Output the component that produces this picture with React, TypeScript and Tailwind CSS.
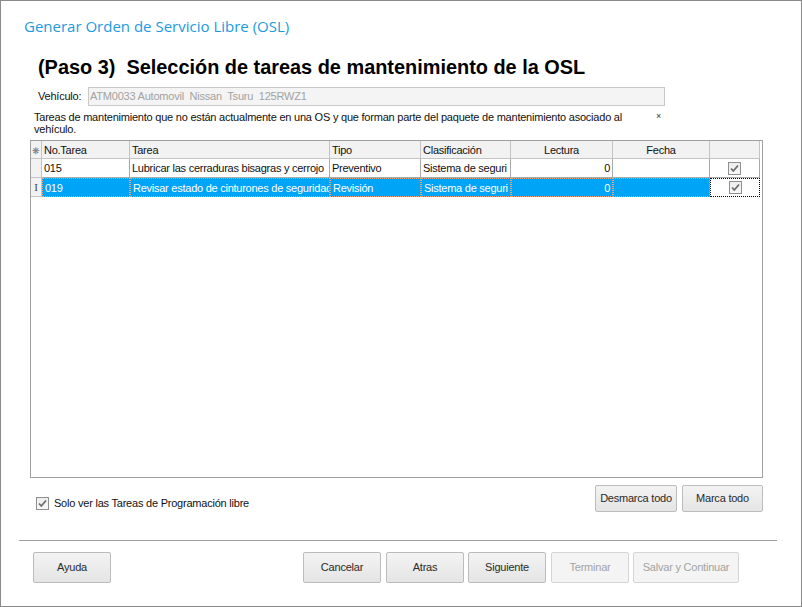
import React from "react";

const F = { fontFamily: '"Liberation Sans", Arial, sans-serif' };

function Check() {
  return (
    <span className="inline-flex w-[13px] h-[13px] border border-[#8e8f8f] bg-gradient-to-b from-[#ededed] to-[#f8f8f8] items-center justify-center">
      <svg width="11" height="11" viewBox="0 0 11 11">
        <path d="M2 5.5 L4.3 8 L9 2.5" fill="none" stroke="#6d6d6d" strokeWidth="1.8" />
      </svg>
    </span>
  );
}

function Btn({ label, cls, disabled }: { label: string; cls: string; disabled?: boolean }) {
  return (
    <div
      className={
        "flex items-center justify-center rounded-[2px] border text-[11px] " +
        cls +
        (disabled
          ? " border-[#d5d5d5] bg-[#f4f4f4] text-[#a3a3a3]"
          : " border-[#bcbcbc] bg-gradient-to-b from-[#f3f3f3] to-[#e5e5e5] text-[#2a2a2a]")
      }
    >
      {label}
    </div>
  );
}

const cols = "grid-cols-[11px_88px_200px_91px_90px_102px_97px_50px]";

function HeadCell({ children, center }: { children?: React.ReactNode; center?: boolean }) {
  return (
    <div
      className={
        "h-[18px] leading-[18px] border-r border-b border-[#c4c4c4] bg-[#f2f2f2] px-[2px] whitespace-nowrap overflow-hidden " +
        (center ? "text-center" : "")
      }
    >
      {children}
    </div>
  );
}

function Cell({
  children,
  right,
  sel,
  center,
}: {
  children?: React.ReactNode;
  right?: boolean;
  sel?: boolean;
  center?: boolean;
}) {
  return (
    <div
      className={
        "h-[19px] leading-[18px] border-r border-b px-[2px] whitespace-nowrap overflow-hidden " +
        (right ? "text-right " : "") +
        (center ? "flex items-center justify-center " : "") +
        (sel
          ? "bg-[#00a4f7] text-white border-[#e9a27a] border-dotted border-l border-t"
          : "bg-white text-[#111] border-[#a9a9a9]")
      }
    >
      {children}
    </div>
  );
}

export default function App() {
  return (
    <div
      className="w-[802px] h-[607px] border border-[#8a8a8a] bg-white flex flex-col text-[11px] text-[#111] tracking-[-0.22px]"
      style={F}
    >
      <div
        className="ml-[23px] mt-[15px] h-[20px] leading-[20px] text-[15px] text-[#1d9ae0] tracking-normal"
        style={{ fontFamily: '"Open Sans", "Noto Sans", sans-serif' }}
      >
        Generar Orden de Servicio Libre (OSL)
      </div>
      <div className="ml-[37px] mt-[19px] h-[24px] leading-[24px] text-[19.9px] font-bold text-black whitespace-pre tracking-normal">
        (Paso 3)  Selección de tareas de mantenimiento de la OSL
      </div>
      <div className="ml-[37px] mt-[8px] h-[19px] flex items-center">
        <div className="w-[50px]">Vehículo:</div>
        <div className="w-[577px] h-[19px] border border-[#c9c9c9] bg-[#f4f4f4] text-[#a2a2a2] leading-[17px] px-[1px] whitespace-pre">
          ATM0033 Automovil  Nissan  Tsuru  125RWZ1
        </div>
      </div>
      <div className="ml-[33px] mt-[5px] flex">
        <div className="w-[620px] leading-[12px]">
          Tareas de mantenimiento que no están actualmente en una OS y que forman parte del paquete de mantenimiento asociado al
          <br />
          vehículo.
        </div>
        <div className="ml-[2px] text-[9px] leading-[10px] text-[#333]">×</div>
      </div>
      <div className="ml-[29px] mt-[5px] w-[733px] h-[338px] border border-[#a0a0a0] bg-white tracking-[-0.25px]">
        <div className={"grid " + cols}>
          <HeadCell>
            <span className="text-[9px] text-[#777] -ml-[1px]">❋</span>
          </HeadCell>
          <HeadCell>No.Tarea</HeadCell>
          <HeadCell>Tarea</HeadCell>
          <HeadCell>Tipo</HeadCell>
          <HeadCell>Clasificación</HeadCell>
          <HeadCell center>Lectura</HeadCell>
          <HeadCell center>Fecha</HeadCell>
          <HeadCell />

          <div className="h-[19px] border-r border-b border-[#c4c4c4] bg-[#f2f2f2]" />
          <Cell>015</Cell>
          <Cell>Lubricar las cerraduras bisagras y cerrojo</Cell>
          <Cell>Preventivo</Cell>
          <Cell>Sistema de seguri</Cell>
          <Cell right>0</Cell>
          <Cell />
          <Cell center>
            <Check />
          </Cell>

          <div
            className="h-[19px] border-r border-b border-[#c4c4c4] bg-[#f2f2f2] text-center leading-[18px] text-[#444]"
            style={{ fontFamily: '"Liberation Serif", serif' }}
          >
            I
          </div>
          <Cell sel>019</Cell>
          <Cell sel>Revisar estado de cinturones de seguridad</Cell>
          <Cell sel>Revisión</Cell>
          <Cell sel>Sistema de seguri</Cell>
          <Cell sel right>
            0
          </Cell>
          <Cell sel />
          <div className="h-[19px] border border-dotted border-black bg-white flex items-center justify-center">
            <Check />
          </div>
        </div>
      </div>
      <div className="mt-[7px] flex items-start">
        <div className="ml-[35px] mt-[12px] flex items-center h-[13px]">
          <Check />
          <span className="ml-[5px]">Solo ver las Tareas de Programación libre</span>
        </div>
        <div className="ml-auto mr-[38px] flex gap-[5px]">
          <Btn label="Desmarca todo" cls="w-[82px] h-[27px]" />
          <Btn label="Marca todo" cls="w-[81px] h-[27px]" />
        </div>
      </div>
      <div className="ml-[18px] mt-[28px] w-[758px] h-px bg-[#a0a0a0]" />
      <div className="mt-[11px] flex">
        <Btn label="Ayuda" cls="ml-[32px] w-[78px] h-[31px]" />
        <Btn label="Cancelar" cls="ml-[192px] w-[78px] h-[31px]" />
        <Btn label="Atras" cls="ml-[5px] w-[78px] h-[31px]" />
        <Btn label="Siguiente" cls="ml-[4px] w-[78px] h-[31px]" />
        <Btn label="Terminar" cls="ml-[5px] w-[78px] h-[31px]" disabled />
        <Btn label="Salvar y Continuar" cls="ml-[4px] w-[106px] h-[31px]" disabled />
      </div>
    </div>
  );
}
